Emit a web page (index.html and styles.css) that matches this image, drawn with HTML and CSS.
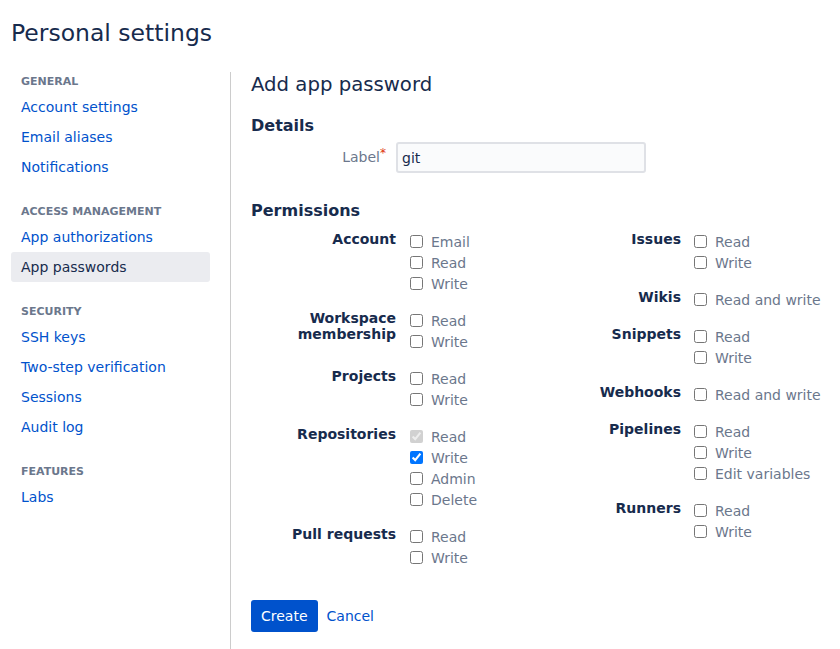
FILE: index.html
```html
<!DOCTYPE html>
<html lang="en">
<head>
<meta charset="utf-8">
<title>Personal settings</title>
<link rel="stylesheet" href="styles.css">
</head>
<body>
<h1 class="page-title">Personal settings</h1>
<div class="layout">
  <nav class="sidebar">
    <div class="nav-section">
      <div class="nav-header">General</div>
      <a class="nav-item" href="#">Account settings</a>
      <a class="nav-item" href="#">Email aliases</a>
      <a class="nav-item" href="#">Notifications</a>
    </div>
    <div class="nav-section">
      <div class="nav-header">Access management</div>
      <a class="nav-item" href="#">App authorizations</a>
      <a class="nav-item selected" href="#">App passwords</a>
    </div>
    <div class="nav-section">
      <div class="nav-header">Security</div>
      <a class="nav-item" href="#">SSH keys</a>
      <a class="nav-item" href="#">Two-step verification</a>
      <a class="nav-item" href="#">Sessions</a>
      <a class="nav-item" href="#">Audit log</a>
    </div>
    <div class="nav-section">
      <div class="nav-header">Features</div>
      <a class="nav-item" href="#">Labs</a>
    </div>
  </nav>
  <main class="content">
    <h2 class="content-title">Add app password</h2>
    <h3 class="section-title">Details</h3>
    <div class="field-row">
      <label class="field-label" for="label">Label<span class="req">*</span></label>
      <input class="text-input" id="label" type="text" value="git">
    </div>
    <h3 class="section-title perms-title">Permissions</h3>
    <div class="perm-grid">
      <div class="perm-col">
        <div class="perm-group">
          <div class="perm-label">Account</div>
          <div class="perm-options">
            <label class="opt"><input type="checkbox">Email</label>
            <label class="opt"><input type="checkbox">Read</label>
            <label class="opt"><input type="checkbox">Write</label>
          </div>
        </div>
        <div class="perm-group">
          <div class="perm-label">Workspace membership</div>
          <div class="perm-options">
            <label class="opt"><input type="checkbox">Read</label>
            <label class="opt"><input type="checkbox">Write</label>
          </div>
        </div>
        <div class="perm-group">
          <div class="perm-label">Projects</div>
          <div class="perm-options">
            <label class="opt"><input type="checkbox">Read</label>
            <label class="opt"><input type="checkbox">Write</label>
          </div>
        </div>
        <div class="perm-group">
          <div class="perm-label">Repositories</div>
          <div class="perm-options">
            <label class="opt"><input type="checkbox" checked disabled>Read</label>
            <label class="opt"><input type="checkbox" checked>Write</label>
            <label class="opt"><input type="checkbox">Admin</label>
            <label class="opt"><input type="checkbox">Delete</label>
          </div>
        </div>
        <div class="perm-group">
          <div class="perm-label">Pull requests</div>
          <div class="perm-options">
            <label class="opt"><input type="checkbox">Read</label>
            <label class="opt"><input type="checkbox">Write</label>
          </div>
        </div>
      </div>
      <div class="perm-col">
        <div class="perm-group">
          <div class="perm-label">Issues</div>
          <div class="perm-options">
            <label class="opt"><input type="checkbox">Read</label>
            <label class="opt"><input type="checkbox">Write</label>
          </div>
        </div>
        <div class="perm-group">
          <div class="perm-label">Wikis</div>
          <div class="perm-options">
            <label class="opt"><input type="checkbox">Read and write</label>
          </div>
        </div>
        <div class="perm-group">
          <div class="perm-label">Snippets</div>
          <div class="perm-options">
            <label class="opt"><input type="checkbox">Read</label>
            <label class="opt"><input type="checkbox">Write</label>
          </div>
        </div>
        <div class="perm-group">
          <div class="perm-label">Webhooks</div>
          <div class="perm-options">
            <label class="opt"><input type="checkbox">Read and write</label>
          </div>
        </div>
        <div class="perm-group">
          <div class="perm-label">Pipelines</div>
          <div class="perm-options">
            <label class="opt"><input type="checkbox">Read</label>
            <label class="opt"><input type="checkbox">Write</label>
            <label class="opt"><input type="checkbox">Edit variables</label>
          </div>
        </div>
        <div class="perm-group">
          <div class="perm-label">Runners</div>
          <div class="perm-options">
            <label class="opt"><input type="checkbox">Read</label>
            <label class="opt"><input type="checkbox">Write</label>
          </div>
        </div>
      </div>
    </div>
    <div class="actions">
      <button class="btn-primary" type="button">Create</button>
      <button class="btn-link" type="button">Cancel</button>
    </div>
  </main>
</div>
</body>
</html>
```
FILE: styles.css
```css
html, body {
  margin: 0;
  padding: 0;
  background: #ffffff;
}
body {
  font-family: "DejaVu Sans", sans-serif;
  font-size: 14px;
  color: #172b4d;
  padding: 0 11px;
  overflow: hidden;
}
.page-title {
  margin: 0;
  padding-top: 19px;
  font-size: 23.5px;
  line-height: 28px;
  font-weight: normal;
  color: #172b4d;
}
.layout {
  display: flex;
  margin-top: 25px;
  min-height: calc(100vh - 72px);
}
.sidebar {
  width: 199px;
  flex: none;
  margin-right: 20px;
  padding-top: 1px;
}
.nav-section {
  margin-bottom: 21px;
}
.nav-header {
  font-size: 11px;
  font-weight: bold;
  line-height: 16px;
  text-transform: uppercase;
  color: #6b778c;
  padding-left: 10px;
  padding-top: 1px;
  margin-bottom: 2px;
}
.nav-item {
  display: block;
  height: 30px;
  line-height: 30px;
  padding-left: 10px;
  color: #0052cc;
  text-decoration: none;
  border-radius: 3px;
}
.nav-item.selected {
  background: #ebecf0;
  color: #172b4d;
}
.content {
  flex: 1;
  border-left: 1px solid #cccccc;
  padding-left: 20px;
}
.content-title {
  margin: 0;
  padding-top: 1px;
  font-size: 19.7px;
  line-height: 24px;
  font-weight: normal;
}
.section-title {
  margin: 19px 0 0;
  font-size: 16px;
  line-height: 20px;
  font-weight: bold;
}
.perms-title {
  margin-top: 28px;
}
.field-row {
  display: flex;
  align-items: center;
  margin-top: 6px;
}
.field-label {
  width: 135px;
  text-align: right;
  color: #6b778c;
  margin-right: 10px;
  position: relative;
  top: -1px;
}
.req {
  color: #de350b;
  font-size: 12px;
  vertical-align: top;
  position: relative;
  top: -3px;
}
.text-input {
  width: 250px;
  height: 31px;
  box-sizing: border-box;
  border: 2px solid #dfe1e6;
  border-radius: 3px;
  background: #fafbfc;
  font-family: "DejaVu Sans", sans-serif;
  font-size: 14px;
  color: #172b4d;
  padding: 0 4px;
  outline: none;
}
.perm-grid {
  display: grid;
  grid-template-columns: 285px 300px;
  margin-top: 10px;
}
.perm-group {
  display: flex;
  margin-bottom: 16px;
}
.perm-label {
  width: 145px;
  flex: none;
  text-align: right;
  font-weight: bold;
  line-height: 16px;
  margin-right: 14px;
}
.perm-col + .perm-col .perm-options {
  margin-left: -1px;
}
.perm-options {
  display: flex;
  flex-direction: column;
}
.opt {
  display: flex;
  align-items: center;
  height: 21px;
  color: #6b778c;
  white-space: nowrap;
}
.opt input {
  margin: 0 8px 0 0;
  width: 13px;
  height: 13px;
}
.actions {
  display: flex;
  align-items: center;
  margin-top: 16px;
}
.btn-primary {
  height: 32px;
  padding: 0 10px;
  border: none;
  border-radius: 3px;
  background: #0052cc;
  color: #ffffff;
  font-family: "DejaVu Sans", sans-serif;
  font-size: 14px;
}
.btn-link {
  border: none;
  background: none;
  padding: 0;
  margin-left: 9px;
  color: #0052cc;
  font-family: "DejaVu Sans", sans-serif;
  font-size: 14px;
}
```
